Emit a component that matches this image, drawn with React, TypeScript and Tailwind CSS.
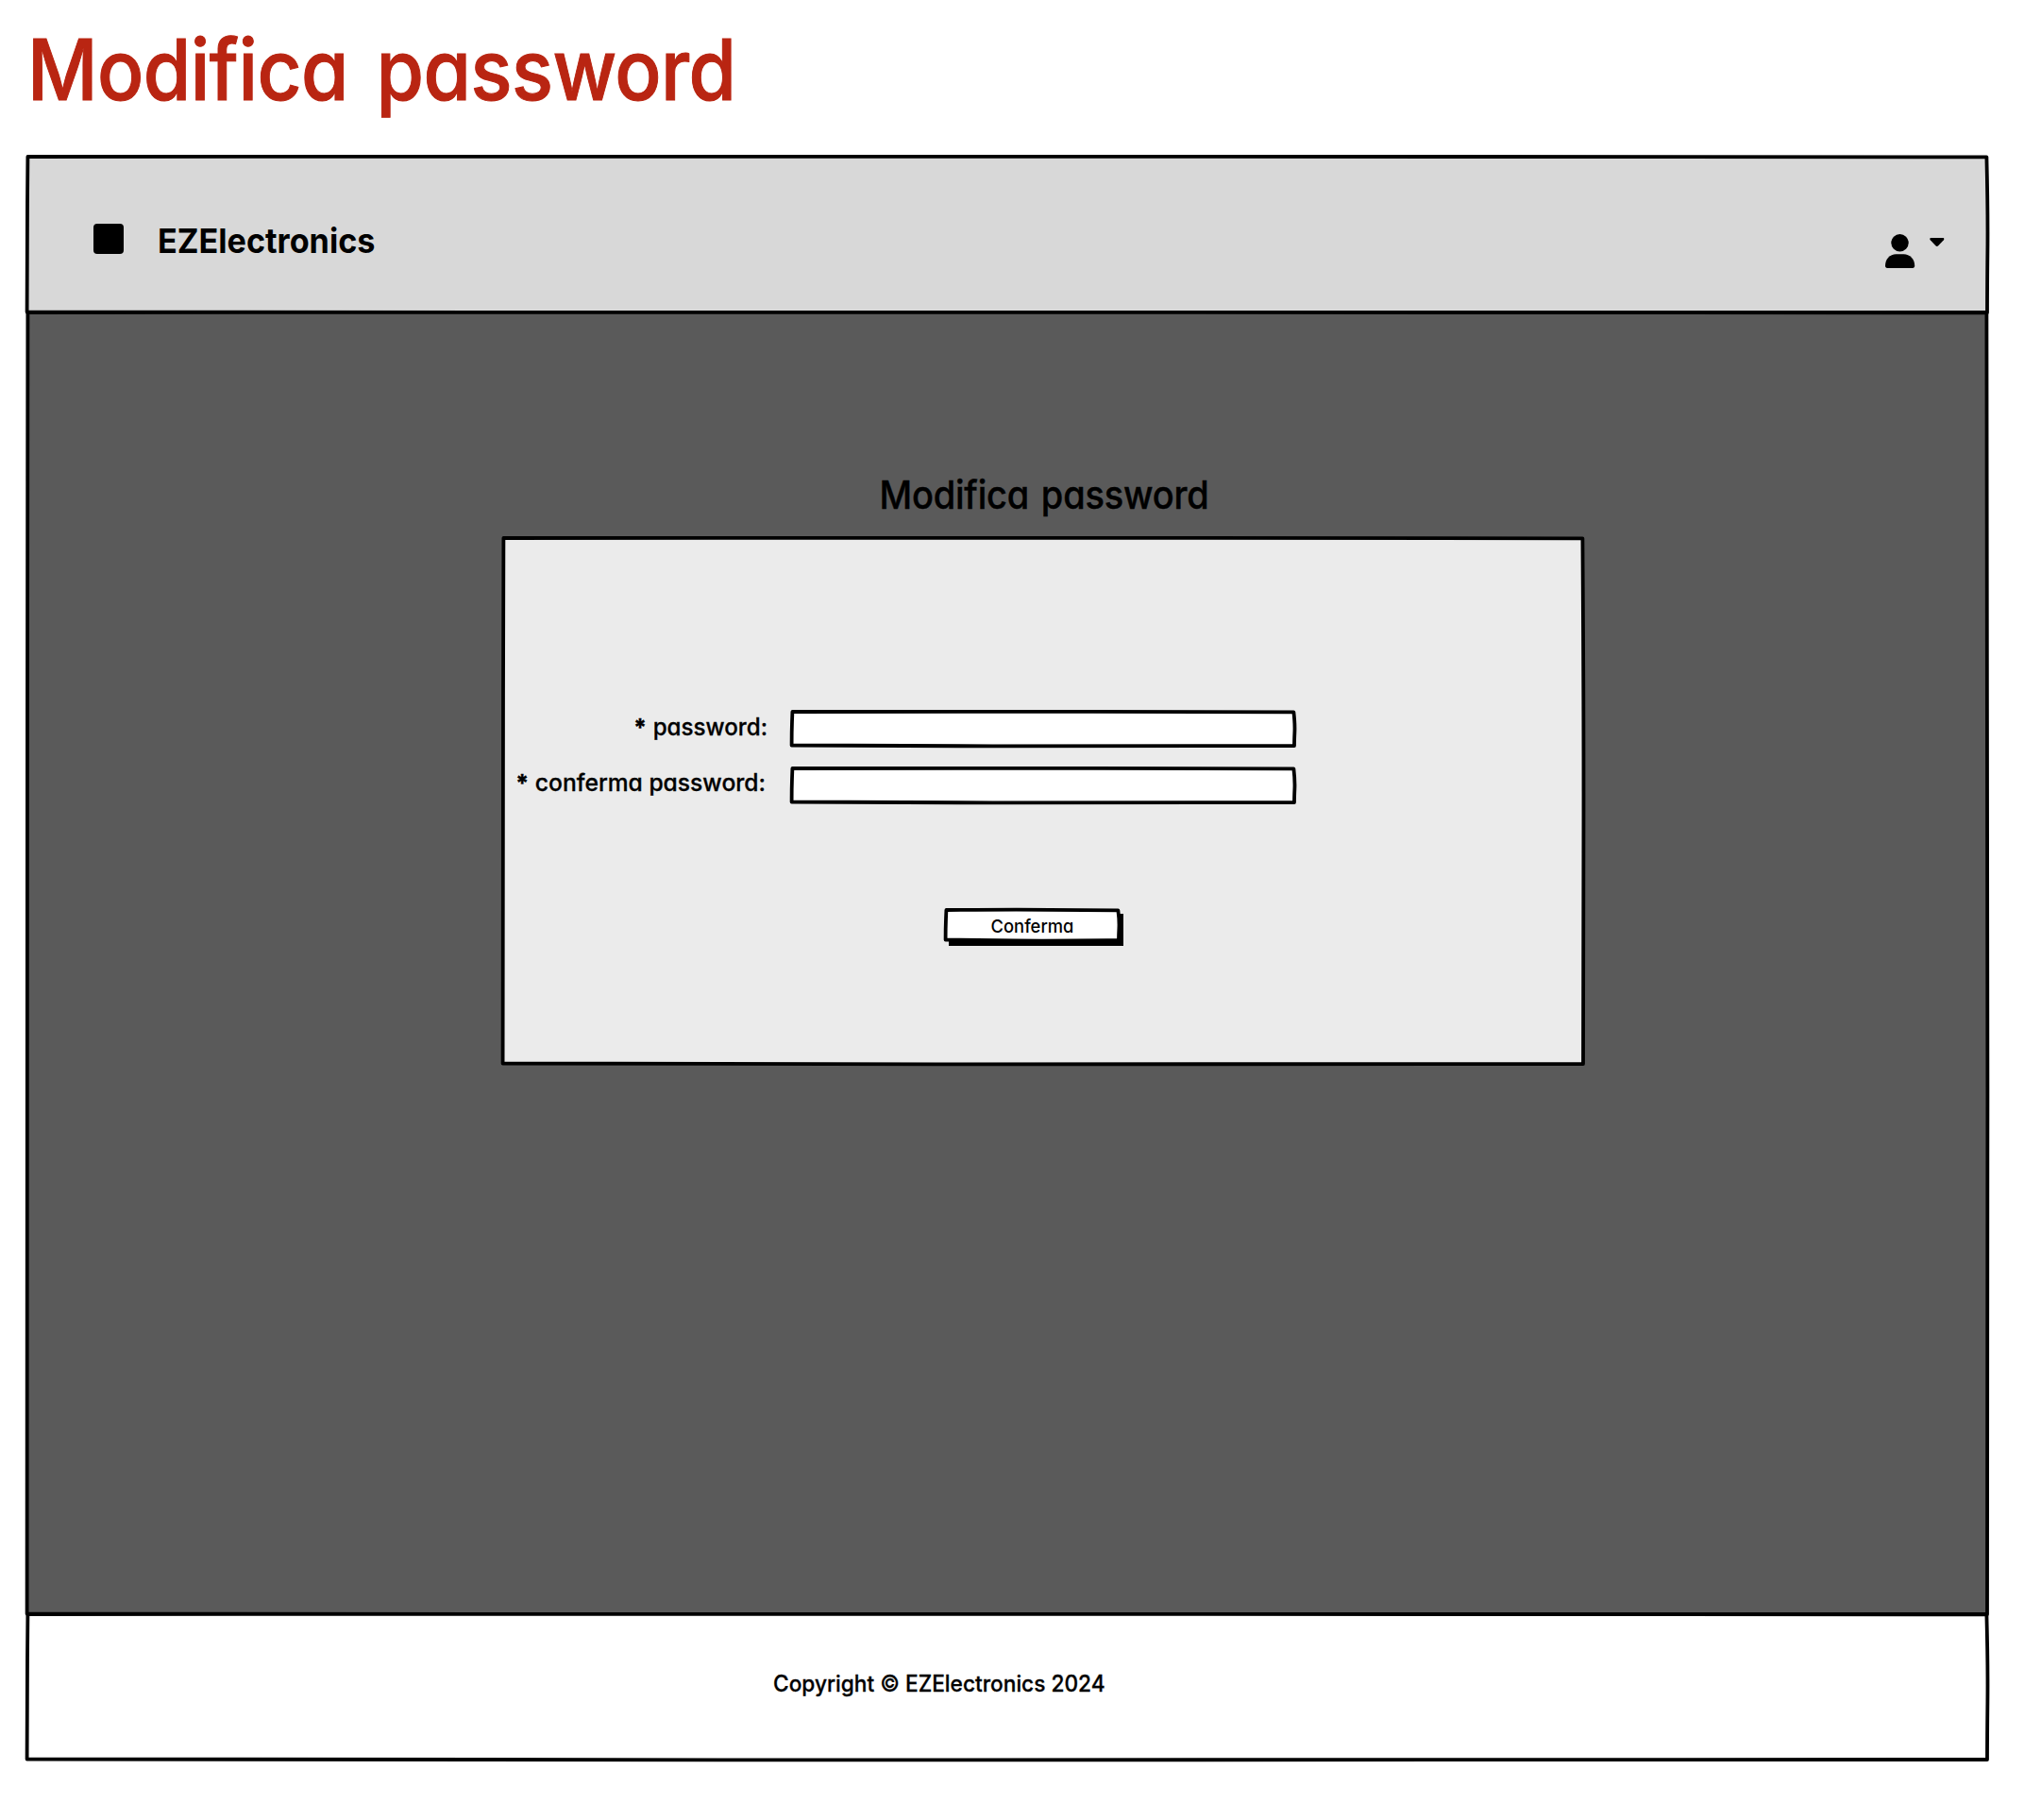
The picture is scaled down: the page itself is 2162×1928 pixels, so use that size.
type OutlineProps = { w: number; h: number; stroke?: number };

/* Hand-drawn looking outline laid over the edges of a box */
function SketchOutline({ w, h, stroke = 3.8 }: OutlineProps) {
  const d = [
    `M0.4 0`,
    `Q${w * 0.4} -0.6 ${w * 0.6} -0.2`,
    `T${w - 0.6} 0.4`,
    `Q${w + 0.8} ${h * 0.35} ${w + 0.4} ${h * 0.6}`,
    `T${w} ${h}`,
    `Q${w * 0.6} ${h + 0.8} ${w * 0.4} ${h + 0.4}`,
    `T-0.4 ${h - 0.5}`,
    `Q-0.4 ${h * 0.6} 0 ${h * 0.3}`,
    `T0.4 0Z`,
  ].join(" ");
  return (
    <svg
      className="pointer-events-none absolute inset-0 overflow-visible"
      width={w}
      height={h}
      fill="none"
      stroke="#000"
      strokeWidth={stroke}
      strokeLinejoin="round"
      aria-hidden="true"
    >
      <path d={d} />
    </svg>
  );
}

function UserIcon() {
  return (
    <svg width="32" height="37" viewBox="0 0 32 37" aria-hidden="true">
      <circle cx="15.5" cy="9.2" r="9.2" />
      <path d="M0 33.5C0 26.3 5 21.2 11.5 21.2h8C26 21.2 31.2 26.3 31.2 33.5c0 1.500-.8 2.500-2.200 2.500H2.200C.8 36 0 35 0 33.500Z" />
    </svg>
  );
}

function CaretIcon() {
  return (
    <svg width="16" height="10" viewBox="0 0 16 10" aria-hidden="true">
      <path d="M1.500 0h12.600c1.200 0 1.600 1.300.8 2.200L9.200 8.300c-.9.900-1.900.9-2.800 0L.7 2.200C-.1 1.300.3 0 1.500 0Z" />
    </svg>
  );
}

function Field({ label, className }: { label: string; className: string }) {
  return (
    <label className="flex h-9">
      <span
        className={`w-[280px] origin-right text-right text-[25px] leading-none font-medium whitespace-nowrap [-webkit-text-stroke:0.3px_#000] ${className}`}
      >
        <span className="font-extrabold">*</span> {label}
      </span>
      <span className="relative h-9 w-[532px] bg-white">
        <SketchOutline w={532} h={36} />
        <input type="text" className="relative h-full w-full bg-transparent px-2 outline-none" />
      </span>
    </label>
  );
}

export default function App() {
  return (
    <div className="h-[1928px] w-[2162px] overflow-hidden bg-white pl-[29px] font-['Inter',sans-serif] text-black [font-feature-settings:'cv11']">
      <h1 className="h-[166px] origin-left scale-x-[0.918] pt-[29px] text-[89px] leading-none font-medium tracking-[-0.6px] whitespace-nowrap text-[#b92512] [-webkit-text-stroke:1px_#b92512] [word-spacing:9px]">
        Modifica password
      </h1>

      <div className="w-[2076px]">
        <header className="relative flex h-[165px] justify-between bg-[#d8d8d8] pr-[45px] pl-[70px]">
          <SketchOutline w={2076} h={165} />
          <div className="flex items-start pt-[71px]">
            <div className="h-8 w-8 rounded-[4px] bg-black" />
            <div className="ml-9 origin-left scale-x-[0.95] text-4xl leading-none font-bold">
              EZElectronics
            </div>
          </div>
          <button className="flex items-start gap-[15px] pt-[82px]" aria-label="Account">
            <UserIcon />
            <span className="pt-1">
              <CaretIcon />
            </span>
          </button>
        </header>

        <main className="relative h-[1379px] bg-[#5a5a5a] pl-[504px]">
          <SketchOutline w={2076} h={1379} />
          <h2 className="h-[239px] w-[1146px] scale-x-[0.927] pt-[173px] text-center text-[41px] leading-none font-medium tracking-[-0.2px] [-webkit-text-stroke:0.4px_#000] [word-spacing:3px]">
            Modifica password
          </h2>
          <form className="relative h-[557px] w-[1144px] bg-[#ebebeb] pt-[184px]">
            <SketchOutline w={1144} h={557} />
            <div className="flex flex-col gap-6">
              <Field label="password:" className="mr-[26px] scale-x-[0.967] pt-1" />
              <Field label="conferma password:" className="mr-[28px] -ml-0.5 scale-x-[0.985] pt-[3px]" />
            </div>
            <button
              type="button"
              className="relative mt-[114px] ml-[469px] flex h-8 w-[183px] justify-center bg-white pt-2 text-[19px] leading-none font-medium shadow-[4px_5px_0_1px_#000]"
            >
              <SketchOutline w={183} h={32} />
              <span className="-ml-px scale-x-[0.965]">Conferma</span>
            </button>
          </form>
        </main>

        <footer className="relative h-[154px] bg-white pt-[62px] pl-[790px]">
          <SketchOutline w={2076} h={154} />
          <p className="origin-left scale-x-[0.945] text-2xl leading-none font-medium whitespace-nowrap [-webkit-text-stroke:0.3px_#000]">
            Copyright © EZElectronics 2024
          </p>
        </footer>
      </div>
    </div>
  );
}
